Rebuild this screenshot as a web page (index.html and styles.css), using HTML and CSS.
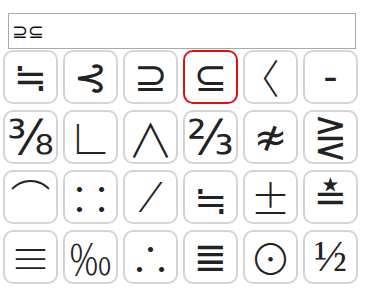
FILE: index.html
```html
<!DOCTYPE html>
<html>
<head>
<meta charset="utf-8">
<link rel="stylesheet" href="styles.css">
</head>
<body>
<div class="app">
  <input class="field" type="text" value="⊇⊆">
  <div class="grid">
    <button class="key">≒</button>
    <button class="key">⊰</button>
    <button class="key">⊇</button>
    <button class="key selected">⊆</button>
    <button class="key cjk bracket">〈</button>
    <button class="key dash">-</button>

    <button class="key frac">⅜</button>
    <button class="key cjk">∟</button>
    <button class="key cjk wedge">∧</button>
    <button class="key frac">⅔</button>
    <button class="key">≉</button>
    <button class="key">⋛</button>

    <button class="key cjk">⌒</button>
    <button class="key cjk">∷</button>
    <button class="key serif slash">∕</button>
    <button class="key cjk">≒</button>
    <button class="key cjk">±</button>
    <button class="key">≛</button>

    <button class="key cjk">≡</button>
    <button class="key cjk mille">‰</button>
    <button class="key cjk">∴</button>
    <button class="key">≣</button>
    <button class="key cjk big">⊙</button>
    <button class="key serif half">½</button>
  </div>
</div>
</body>
</html>
```

FILE: styles.css
```css
html, body {
  margin: 0;
  padding: 0;
  background: #ffffff;
}

.app {
  padding-top: 13px;
}

.field {
  display: block;
  box-sizing: border-box;
  margin: 0 0 1px 8px;
  width: 348px;
  height: 36px;
  border: 1px solid #a9a9a9;
  padding: 0 3px;
  font-family: "DejaVu Sans", sans-serif;
  font-size: 19px;
  color: #111;
  outline: none;
}

.grid {
  margin-left: 3px;
  display: grid;
  grid-template-columns: repeat(6, 55px);
  grid-auto-rows: 54px;
  column-gap: 5px;
  row-gap: 6px;
}

.key {
  box-sizing: border-box;
  display: flex;
  align-items: center;
  justify-content: center;
  padding: 0;
  margin: 0;
  background: #ffffff;
  border: 2px solid #d4d4d4;
  border-radius: 10px;
  font-family: "DejaVu Sans", sans-serif;
  font-size: 40px;
  line-height: 1;
  color: #222;
}

.key.serif {
  font-family: "Liberation Serif", serif;
}

.key.cjk {
  font-family: "Noto Sans CJK JP", "DejaVu Sans", sans-serif;
  font-weight: 300;
}

.key.bracket {
  padding-right: 22px;
}

.key.frac {
  font-size: 48px;
}

.key.wedge {
  font-size: 46px;
}

.key.slash {
  font-size: 46px;
}

.key.mille {
  font-size: 42px;
}

.key.half {
  font-size: 44px;
}

.key.big {
  font-size: 42px;
}

.key.selected {
  border-color: #e01010;
}
```
